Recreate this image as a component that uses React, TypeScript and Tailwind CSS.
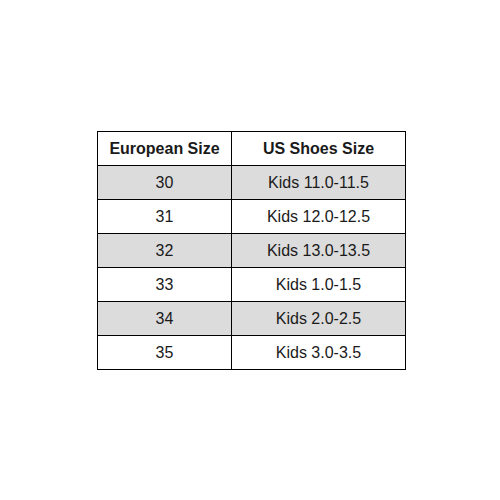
const rows = [
  { eu: "30", us: "Kids 11.0-11.5" },
  { eu: "31", us: "Kids 12.0-12.5" },
  { eu: "32", us: "Kids 13.0-13.5" },
  { eu: "33", us: "Kids 1.0-1.5" },
  { eu: "34", us: "Kids 2.0-2.5" },
  { eu: "35", us: "Kids 3.0-3.5" },
];

export default function App() {
  return (
    <div className="w-[500px] h-[500px] bg-white pt-[131px] pl-[97px] font-['Liberation_Sans',Arial,sans-serif] text-[16px] text-[#1a1a1a]">
      <table className="border-collapse">
        <thead>
          <tr className="h-[34px]">
            <th className="w-[134px] border border-black font-bold text-center p-0">European Size</th>
            <th className="w-[174px] border border-black font-bold text-center p-0">US Shoes Size</th>
          </tr>
        </thead>
        <tbody>
          {rows.map((r, i) => (
            <tr key={r.eu} className={`h-[34px] ${i % 2 === 0 ? "bg-[#dcdcdc]" : "bg-white"}`}>
              <td className="border border-black text-center p-0">{r.eu}</td>
              <td className="border border-black text-center p-0">{r.us}</td>
            </tr>
          ))}
        </tbody>
      </table>
    </div>
  );
}
